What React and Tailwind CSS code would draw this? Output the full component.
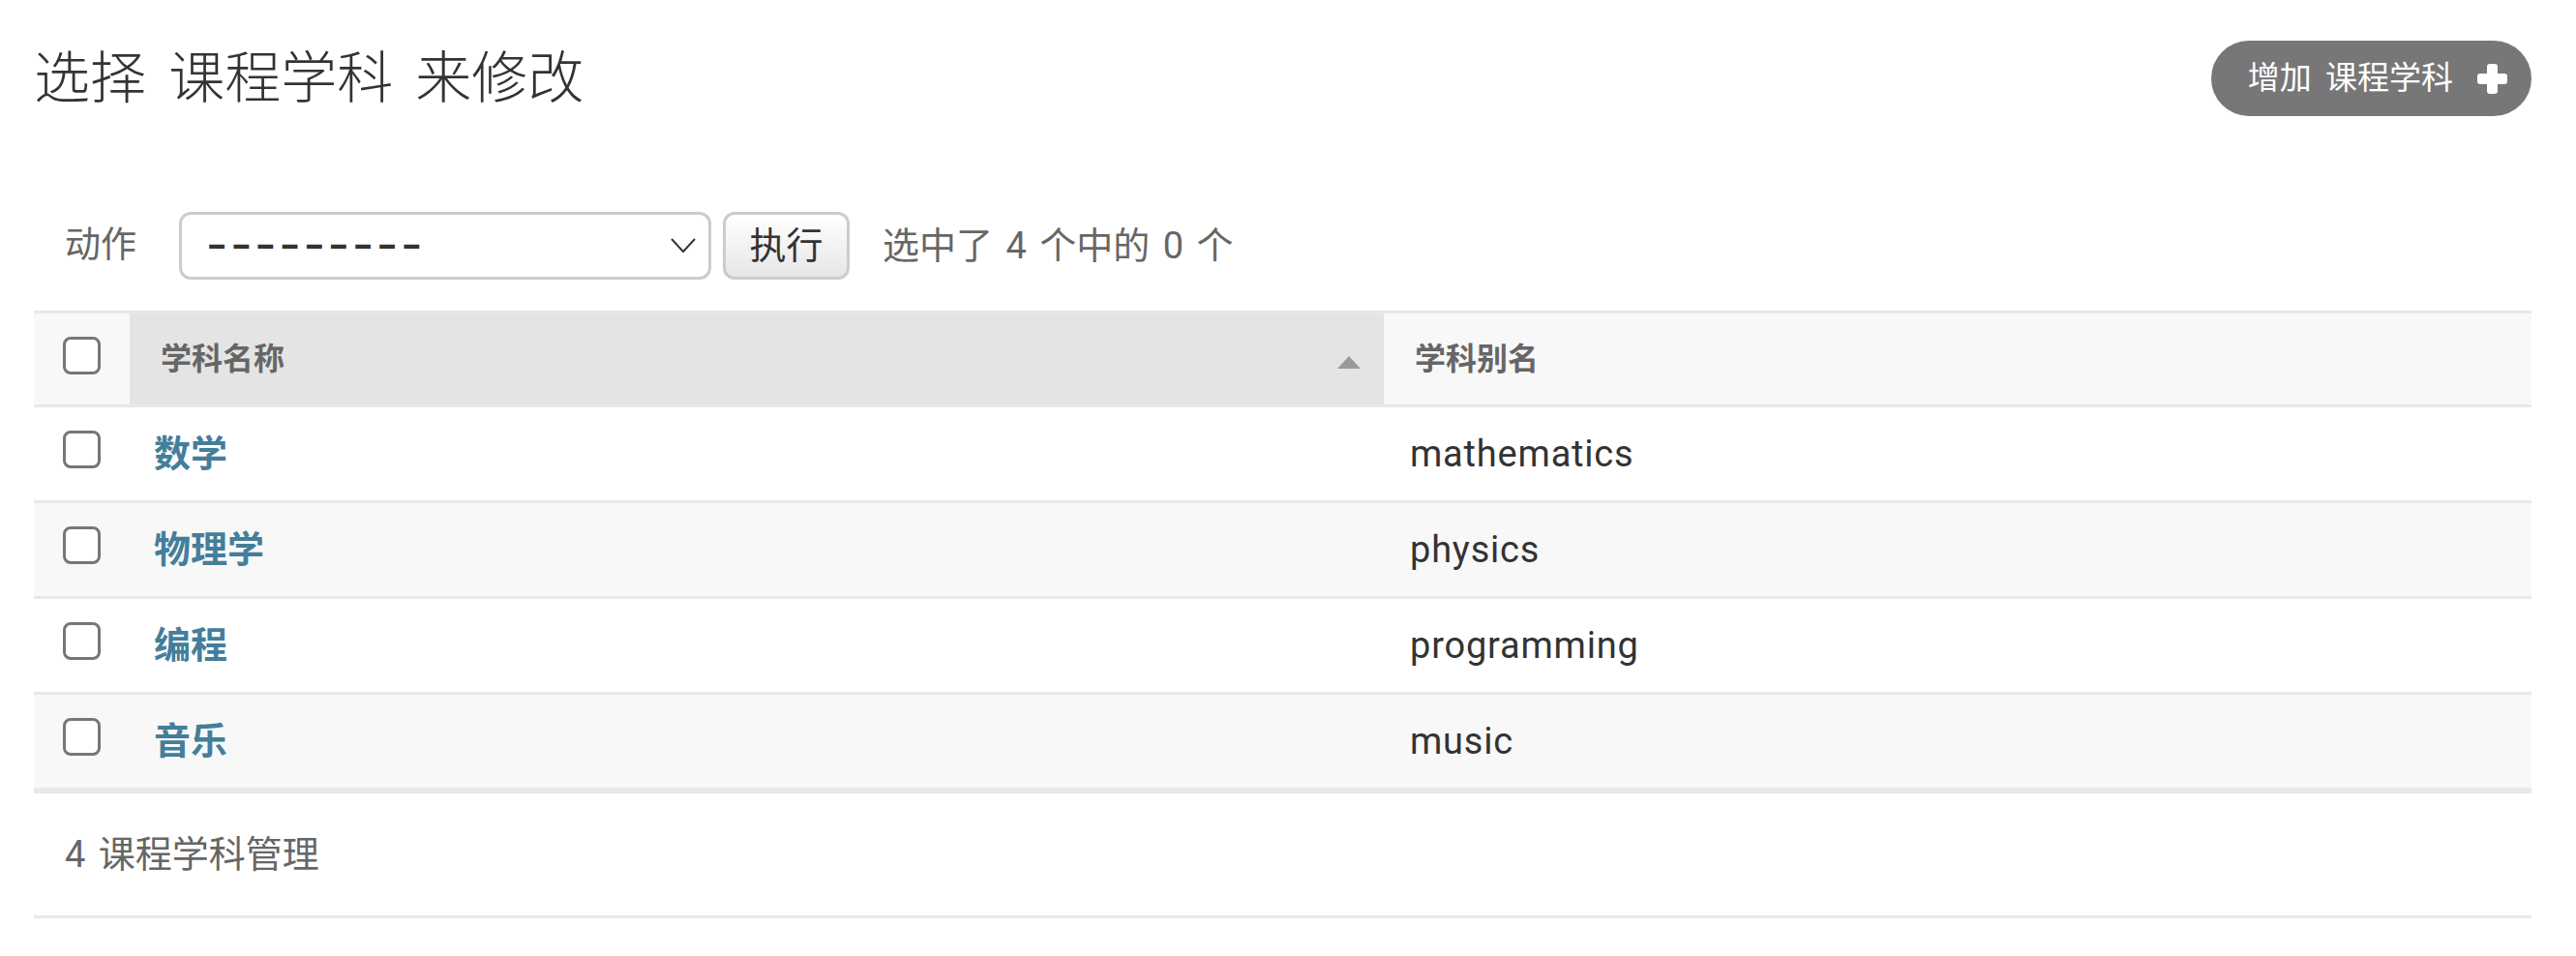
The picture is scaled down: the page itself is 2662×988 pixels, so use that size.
import React from "react";

const rows = [
  { name: "数学", alias: "mathematics" },
  { name: "物理学", alias: "physics" },
  { name: "编程", alias: "programming" },
  { name: "音乐", alias: "music" },
];

/* ================= SMALL PARTS ================= */

const Checkbox = () => (
  <span className="block h-[39px] w-[39px] rounded-[8px] border-[3px] border-[#767676] bg-white" />
);

const PlusIcon = () => (
  <svg width="31" height="31" viewBox="0 0 31 31">
    <rect x="10" y="0" width="11" height="31" rx="3" fill="#fff" />
    <rect x="0" y="10" width="31" height="11" rx="3" fill="#fff" />
  </svg>
);

const App = () => {
  return (
    <div className="min-h-screen bg-white pl-[35px] pr-[46px] font-['Roboto','Noto_Sans_CJK_SC',sans-serif]">

      {/* ================= HEADER ================= */}
      <div className="flex items-center justify-between pt-[42px]">
        <h1 className="text-[58px] font-light leading-[78px] text-[#333] [word-spacing:9px]">
          选择 课程学科 来修改
        </h1>

        <a className="flex h-[78px] items-center gap-[25px] rounded-full bg-[#777] pl-[38px] pr-[25px] text-[33px] text-white">
          <span className="[word-spacing:6px]">增加 课程学科</span>
          <PlusIcon />
        </a>
      </div>

      {/* ================= ACTIONS ================= */}
      <div className="mt-[99px] flex h-[70px] items-center">
        <span className="w-[150px] pl-[32px] text-[37px] text-[#666]">动作</span>

        <div className="flex h-[70px] w-[550px] items-center justify-between rounded-[12px] border-[3px] border-[#ccc] bg-white pl-[25px] pr-[10px]">
          <span className="inline-block origin-left scale-x-150 text-[38px] font-bold tracking-[1.8px] text-[#333]">---------</span>
          <svg width="26" height="16" viewBox="0 0 26 16" className="mr-[3px]">
            <path d="M1 1 L13 14 L25 1" fill="none" stroke="#333" strokeWidth="2" />
          </svg>
        </div>

        <button className="ml-[12px] h-[70px] w-[131px] rounded-[12px] border-[3px] border-[#ccc] bg-gradient-to-b from-white to-[#e6e6e6] text-[38px] text-[#333]">
          执行
        </button>

        <span className="ml-[34px] text-[38px] text-[#666] [word-spacing:4px]">选中了 4 个中的 0 个</span>
      </div>

      {/* ================= TABLE ================= */}
      <div className="mt-[32px] grid h-[100px] grid-cols-[99px_1296px_1fr] border-y-[3px] border-[#e8e8e8]">
        <div className="bg-[#f8f8f8] pl-[30px] pt-[24px]">
          <Checkbox />
        </div>
        <div className="flex items-center justify-between bg-[#e4e4e4] pl-[32px] pr-[24px] text-[32px] font-semibold text-[#666]">
          <span>学科名称</span>
          <svg width="24" height="13" viewBox="0 0 24 13" className="mt-[6px]">
            <path d="M12 0 L24 13 L0 13 Z" fill="#999" />
          </svg>
        </div>
        <div className="flex items-center bg-[#f8f8f8] pl-[32px] text-[32px] font-semibold text-[#666]">
          学科别名
        </div>
      </div>

      {rows.map((r, i) => (
        <div
          key={r.name}
          className={`grid h-[99px] grid-cols-[99px_1296px_1fr] border-b-[3px] border-[#e8e8e8] ${
            i % 2 ? "bg-[#f8f8f8]" : "bg-white"
          }`}
        >
          <div className="pl-[30px] pt-[24px]">
            <Checkbox />
          </div>
          <div className="flex items-center pl-[25px] text-[38px] font-semibold text-[#447e9b]">
            {r.name}
          </div>
          <div className="flex items-center pl-[27px] text-[38px] tracking-[0.8px] text-[#333]">
            {r.alias}
          </div>
        </div>
      ))}

      {/* ================= PAGINATOR ================= */}
      <div className="flex h-[132px] items-center border-y-[3px] border-[#e8e8e8] pl-[32px] text-[38px] text-[#666] [word-spacing:4px]">
        4 课程学科管理
      </div>

    </div>
  );
};

export default App;
